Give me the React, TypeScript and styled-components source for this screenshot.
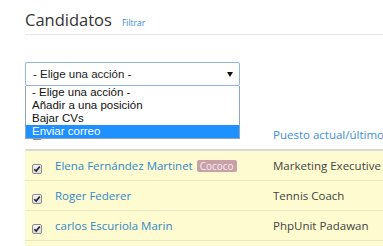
import React from "react";
import styled, { createGlobalStyle } from "styled-components";

const Global = createGlobalStyle`
  html, body { margin: 0; padding: 0; background: #fff; overflow: hidden; }
  body { font-family: "Open Sans", "Liberation Sans", sans-serif; color: #333; }
`;

const Page = styled.div`
  padding-left: 25px;
`;

const Header = styled.div`
  display: flex;
  align-items: baseline;
  gap: 10px;
  padding: 10px 0 4px;
  border-bottom: 1px solid #e6e6e6;
`;

const Title = styled.h1`
  margin: 0;
  font-size: 16.5px;
  line-height: 20px;
  font-weight: 400;
  color: #333;
`;

const FilterLink = styled.a`
  font-size: 8.5px;
  color: #3a8bd8;
  text-decoration: none;
`;

const SelectWrap = styled.div`
  position: relative;
  width: 215px;
  margin-top: 27px;
`;

const SelectBox = styled.div`
  box-sizing: border-box;
  height: 24px;
  border: 1px solid #8fb3ea;
  border-radius: 2px;
  display: flex;
  align-items: center;
  justify-content: space-between;
  padding: 0 6px 0 7px;
  font-family: "Liberation Sans", Arial, sans-serif;
  font-size: 11.5px;
  color: #222;
`;

const Arrow = styled.span`
  width: 0;
  height: 0;
  border-left: 3px solid transparent;
  border-right: 3px solid transparent;
  border-top: 5px solid #111;
`;

const Menu = styled.ul`
  position: absolute;
  top: 100%;
  left: 0;
  right: 0;
  margin: 0;
  padding: 0;
  list-style: none;
  background: #fff;
  border: 1px solid #8ea4c2;
  border-top: none;
  z-index: 2;
  font-family: "Liberation Sans", Arial, sans-serif;
  font-size: 11.5px;
`;

const MenuItem = styled.li<{ $active?: boolean }>`
  height: 13px;
  line-height: 13px;
  padding-left: 6px;
  color: ${(p) => (p.$active ? "#fff" : "#111")};
  background: ${(p) => (p.$active ? "#1e90ff" : "#fff")};
`;

const Table = styled.div`
  margin-top: 34px;
`;

const Row = styled.div<{ $head?: boolean }>`
  display: grid;
  grid-template-columns: 30px 218px 1fr;
  align-items: center;
  height: 29px;
  background: ${(p) => (p.$head ? "#fff" : "#fefbd0")};
  border-bottom: ${(p) => (p.$head ? "2px solid #d9d9d9" : "1px solid #ebe6c4")};
  font-size: 11.5px;
`;

const CheckCell = styled.div<{ $head?: boolean }>`
  display: flex;
  padding-left: 7px;
  margin-top: ${(p) => (p.$head ? "0" : "6px")};
`;

const Box = styled.span`
  box-sizing: border-box;
  width: 10px;
  height: 10px;
  border: 1px solid #8c8c8c;
  border-radius: 2px;
  background: linear-gradient(#f4f4f4, #dcdcdc);
  display: flex;
  align-items: center;
  justify-content: center;
`;

const NameCell = styled.div`
  display: flex;
  align-items: center;
`;

const NameLink = styled.a`
  color: #3189c9;
  text-decoration: none;
  white-space: nowrap;
`;

const HeadLabel = styled.span`
  color: #3a8fd9;
  white-space: nowrap;
`;

const Badge = styled.span`
  margin-left: 4px;
  height: 12px;
  line-height: 12px;
  padding: 0 3px;
  border-radius: 2px;
  background: #c8a0a8;
  color: #f8eef0;
  font-size: 10px;
`;

const JobCell = styled.div`
  color: #444;
  white-space: nowrap;
`;

function Check({ checked }: { checked?: boolean }) {
  return (
    <Box>
      {checked && (
        <svg width="8" height="8" viewBox="0 0 8 8">
          <path d="M1.3 4.2 L3.2 6.1 L6.8 1.6" fill="none" stroke="#222" strokeWidth="1.6" />
        </svg>
      )}
    </Box>
  );
}

const candidates = [
  { name: "Elena Fernández Martinet", tag: "Cococo", job: "Marketing Executive" },
  { name: "Roger Federer", job: "Tennis Coach" },
  { name: "carlos Escuriola Marin", job: "PhpUnit Padawan" },
];

export default function App() {
  return (
    <>
      <Global />
      <Page>
        <Header>
          <Title>Candidatos</Title>
          <FilterLink href="#">Filtrar</FilterLink>
        </Header>
        <SelectWrap>
          <SelectBox>
            <span>- Elige una acción -</span>
            <Arrow />
          </SelectBox>
          <Menu>
            <MenuItem>- Elige una acción -</MenuItem>
            <MenuItem>Añadir a una posición</MenuItem>
            <MenuItem>Bajar CVs</MenuItem>
            <MenuItem $active>Enviar correo</MenuItem>
          </Menu>
        </SelectWrap>
        <Table>
          <Row $head>
            <CheckCell $head>
              <Check />
            </CheckCell>
            <NameCell />
            <HeadLabel>Puesto actual/último</HeadLabel>
          </Row>
          {candidates.map((c) => (
            <Row key={c.name}>
              <CheckCell>
                <Check checked />
              </CheckCell>
              <NameCell>
                <NameLink href="#">{c.name}</NameLink>
                {c.tag && <Badge>{c.tag}</Badge>}
              </NameCell>
              <JobCell>{c.job}</JobCell>
            </Row>
          ))}
          <Row />
        </Table>
      </Page>
    </>
  );
}
